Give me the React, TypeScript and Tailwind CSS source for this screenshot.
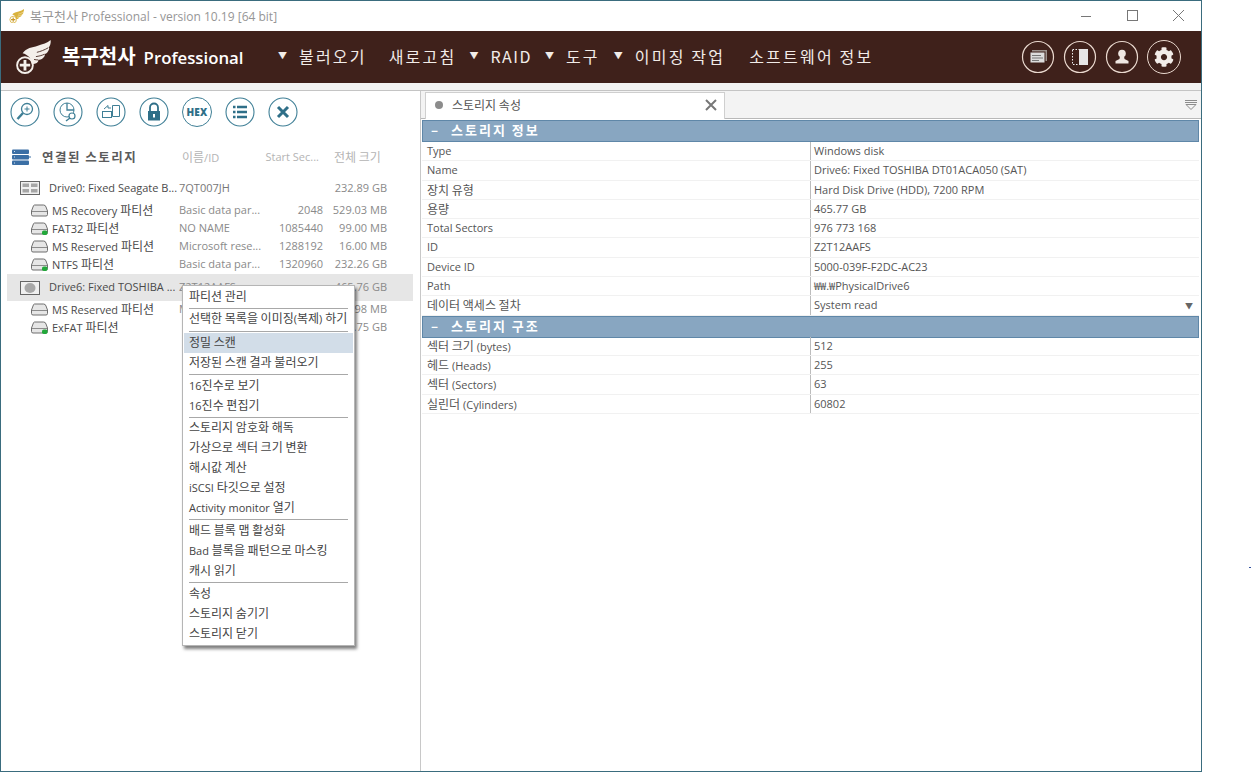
import React from "react";
import { FaCog } from "react-icons/fa";

const FONT = { fontFamily: '"Open Sans","Noto Sans CJK KR",sans-serif' };
const KFONT = { fontFamily: '"Noto Sans CJK KR",sans-serif' };

/* Korean runs are drawn slightly larger than the Latin text around them, as in the reference */
function K({ t, size = "text-[12px]" }: { t: string; size?: string }) {
  const parts = t.split(/([가-힣]+(?: [가-힣]+)*)/);
  return (
    <>
      {parts.map((p, i) =>
        /[가-힣]/.test(p) ? (
          <span key={i} className={size} style={KFONT}>
            {p}
          </span>
        ) : (
          <span key={i}>{p}</span>
        ),
      )}
    </>
  );
}

function Tool({ children }: { children: React.ReactNode }) {
  return (
    <svg width="30" height="30" viewBox="0 0 30 30" className="shrink-0">
      <circle cx="15" cy="15" r="14" fill="#fff" stroke="#3f7f96" strokeWidth="1.1" />
      {children}
    </svg>
  );
}

function HeadIcon({ children }: { children: React.ReactNode }) {
  return (
    <svg width="34" height="34" viewBox="0 0 34 34" className="shrink-0">
      <circle cx="17" cy="17" r="15.5" fill="none" stroke="#ead9cf" strokeWidth="1.2" />
      {children}
    </svg>
  );
}

function Wing({ size, color, plus, slit }: { size: number; color: string; plus: string; slit: string }) {
  return (
    <svg width={size} height={size * 0.9} viewBox="0 0 40 36">
      <path
        d="M8 14C12 8 18 8 24 6C29 4.500 34 3 37.500 0C38 3 37 6 35.500 8C36.500 8.500 36 10 35 11.500C34 13.500 32.500 14.500 31 15C32 16 31 17.500 29.500 19C28 20.500 26 21 24.500 21C25 22.500 23.500 24 21.500 24.800C20 25.400 18.500 25.200 17.500 24.500C17 19 13.500 15.500 8 14Z"
        fill={color}
      />
      <path d="M35 8.200C31 10.500 27 12 23 13M31 15C28 16.500 25 17 22 17.500M24.500 21C23 21 21.500 20.800 20 20.500" fill="none" stroke={slit} strokeWidth="0.9" />
      <circle cx="10.500" cy="26.500" r="8.300" fill="none" stroke={color} strokeWidth="2" />
      <path d="M10.500 21V32M5 26.500H16" stroke={plus} strokeWidth="3" />
    </svg>
  );
}

function Partition({ on }: { on?: boolean }) {
  return (
    <svg width="17" height="13" viewBox="0 0 17 13" className="shrink-0">
      <path d="M3.500 1H12.500Q14.500 1 15 3L16.500 7V10.500Q16.500 12 15 12H2Q0.500 12 0.500 10.500V7L2 3Q2.500 1 3.500 1Z" fill="#e6e6e6" stroke="#6e6e6e" />
      <path d="M1 7.500H16" stroke="#8c8c8c" />
      {on && <rect x="11" y="8.500" width="5.500" height="4.500" rx="1.800" fill="#22a83a" />}
    </svg>
  );
}

function DriveIcon({ kind }: { kind: 0 | 6 }) {
  return (
    <svg width="20" height="14" viewBox="0 0 20 14" className="shrink-0">
      <rect x="0.500" y="0.500" width="19" height="13" fill="#f0f0f0" stroke="#666" />
      {kind === 0 ? (
        <path d="M2.500 2.500H9V6H2.500ZM11 2.500H17.500V6H11ZM2.500 8H9V11.500H2.500ZM11 8H17.500V11.500H11Z" fill="#a6a6a6" />
      ) : (
        <ellipse cx="10" cy="7" rx="5.500" ry="5" fill="#a8a8a8" />
      )}
    </svg>
  );
}

type Part = [string, string, string, string, boolean];
const parts1: Part[] = [
  ["MS Recovery 파티션", "Basic data par...", "2048", "529.03 MB", false],
  ["FAT32 파티션", "NO NAME", "1085440", "99.00 MB", true],
  ["MS Reserved 파티션", "Microsoft rese...", "1288192", "16.00 MB", false],
  ["NTFS 파티션", "Basic data par...", "1320960", "232.26 GB", true],
];
const parts2: Part[] = [
  ["MS Reserved 파티션", "Microsoft rese...", "34", "15.98 MB", false],
  ["ExFAT 파티션", "", "", "465.75 GB", true],
];

function PartRow({ p }: { p: Part }) {
  return (
    <div className="grid h-[18px] grid-cols-[178px_85px_59px_64px] items-center text-[#8a8a8a]">
      <div className="flex items-center gap-[4px] pl-[30px] text-[#4a4a4a]">
        <Partition on={p[4]} />
        <span className="truncate">
          <K t={p[0]} />
        </span>
      </div>
      <span className="truncate">{p[1]}</span>
      <span className="text-right">{p[2]}</span>
      <span className="text-right">{p[3]}</span>
    </div>
  );
}

type MI = { t: string; h?: boolean; sep?: number };
const menu: MI[] = [
  { t: "파티션 관리", sep: 2 },
  { t: "선택한 목록을 이미징(복제) 하기", sep: 4 },
  { t: "정밀 스캔", h: true },
  { t: "저장된 스캔 결과 불러오기", sep: 3 },
  { t: "16진수로 보기" },
  { t: "16진수 편집기", sep: 2 },
  { t: "스토리지 암호화 해독" },
  { t: "가상으로 섹터 크기 변환" },
  { t: "해시값 계산" },
  { t: "iSCSI 타깃으로 설정" },
  { t: "Activity monitor 열기", sep: 3 },
  { t: "배드 블록 맵 활성화" },
  { t: "Bad 블록을 패턴으로 마스킹" },
  { t: "캐시 읽기", sep: 3 },
  { t: "속성" },
  { t: "스토리지 숨기기" },
  { t: "스토리지 닫기" },
];

const info: [string, string][] = [
  ["Type", "Windows disk"],
  ["Name", "Drive6: Fixed TOSHIBA DT01ACA050 (SAT)"],
  ["장치 유형", "Hard Disk Drive (HDD), 7200 RPM"],
  ["용량", "465.77 GB"],
  ["Total Sectors", "976 773 168"],
  ["ID", "Z2T12AAFS"],
  ["Device ID", "5000-039F-F2DC-AC23"],
  ["Path", "₩₩.₩PhysicalDrive6"],
  ["데이터 액세스 절차", "System read"],
];
const geo: [string, string][] = [
  ["섹터 크기 (bytes)", "512"],
  ["헤드 (Heads)", "255"],
  ["섹터 (Sectors)", "63"],
  ["실린더 (Cylinders)", "60802"],
];

function Section({ t }: { t: string }) {
  return (
    <div className="flex h-[22px] shrink-0 items-center border border-[#5f87a8] bg-[#88a6c1] pb-[2px] pl-[8px] text-[13px] font-bold tracking-[2px] text-white" style={KFONT}>
      <span className="w-[20px]">–</span>
      <span>{t}</span>
    </div>
  );
}

function Row({ r, drop }: { r: [string, string]; drop?: boolean }) {
  return (
    <div className="grid h-[19.300px] shrink-0 grid-cols-[388px_1fr] items-center border-b border-[#f1f1f1] text-[#555]">
      <span className="pl-[5px]">
        <K t={r[0]} />
      </span>
      <div className="flex h-full items-center justify-between border-l border-[#bcbcbc] pl-[3px] pr-[6px]">
        <span>{r[1]}</span>
        {drop && <span className="text-[8px] text-[#666]">▼</span>}
      </div>
    </div>
  );
}

const nav: [boolean, string, string][] = [
  [true, "불러오기", ""],
  [false, "새로고침", "ml-[22px]"],
  [true, "RAID", "ml-[13px]"],
  [true, "도구", "ml-[13px]"],
  [true, "이미징 작업", "ml-[14px]"],
  [false, "소프트웨어 정보", "ml-[24px]"],
];

export default function App() {
  return (
    <div className="relative h-[772px] w-[1251px] overflow-hidden bg-white text-[11px]" style={FONT}>
      <div className="flex h-[772px] w-[1202px] flex-col border border-[#3a6c7e] bg-white">
        {/* title bar */}
        <div className="flex h-[30px] shrink-0 items-center justify-between pl-[8px]">
          <div className="flex items-center gap-[5px] text-[12px] text-[#969696]">
            <Wing size={16} color="#d9b23c" plus="#c9982a" slit="#fff" />
            <span>
              <K t="복구천사" size="text-[13px]" /> Professional - version 10.19 [64 bit]
            </span>
          </div>
          <svg width="136" height="30" viewBox="0 0 136 30" stroke="#777" fill="none" className="shrink-0">
            <path d="M16 15.500H26" />
            <rect x="62.500" y="9.500" width="10" height="10" />
            <path d="M108 9L119 20M119 9L108 20" />
          </svg>
        </div>
        {/* brown header */}
        <div className="flex h-[52px] shrink-0 items-center bg-[#3f211b] pl-[14px] pr-[20px] text-white">
          <Wing size={38} color="#f4efea" plus="#f4efea" slit="#3f211b" />
          <div className="ml-[9px] flex w-[216px] items-baseline gap-[8px] pb-[3px] font-semibold">
            <span className="text-[20px]" style={KFONT}>
              복구천사
            </span>
            <span className="text-[16.800px]">Professional</span>
          </div>
          <div className="flex items-center pb-[3px] text-[16px] tracking-[2.200px] text-[#f2ece8]" style={KFONT}>
            {nav.map(([a, t, m]) => (
              <div key={t} className={`flex items-center gap-[12px] ${m}`}>
                {a && <span className="text-[9px] tracking-normal">▼</span>}
                <span className={t === "RAID" ? "tracking-[1.500px]" : ""}>{t}</span>
              </div>
            ))}
          </div>
          <div className="ml-auto flex items-center gap-[8px]">
            <HeadIcon>
              <rect x="11" y="10" width="15" height="11" fill="#9b918c" />
              <rect x="9" y="12" width="15" height="11" fill="#ddd" stroke="#3f211b" />
              <path d="M11 15.500H20M11 18H22M11 20.500H18" stroke="#777" />
            </HeadIcon>
            <HeadIcon>
              <rect x="9.500" y="9.500" width="7" height="15" fill="none" stroke="#eee" strokeDasharray="1.500 1.500" />
              <rect x="16" y="9" width="9" height="16" fill="#e6e6e6" />
            </HeadIcon>
            <HeadIcon>
              <circle cx="17" cy="13.500" r="3.800" fill="#efe7e2" />
              <path d="M15 16H19L19.500 19L23.500 21V23.500H10.500V21L14.500 19Z" fill="#efe7e2" />
            </HeadIcon>
            <div className="relative flex h-[34px] w-[34px] items-center justify-center rounded-full border-[1.2px] border-[#ead9cf] text-[#f2ece8]">
              <FaCog size={20} />
            </div>
          </div>
        </div>
        <div className="h-[8px] shrink-0 border-b border-[#c4c4c4] bg-[#f3f3f3]" />
        {/* body */}
        <div className="flex min-h-0 flex-1">
          {/* left */}
          <div className="relative w-[419px] shrink-0 bg-white">
            <div className="flex h-[55px] gap-[13px] pl-[9px] pt-[6px]">
              <Tool>
                <circle cx="17" cy="12" r="5.500" fill="none" stroke="#3f7f96" strokeWidth="1.300" />
                <path d="M13 16L7.500 22" stroke="#3f7f96" strokeWidth="2.500" />
                <path d="M17 9.500V14.500M14.500 12H19.500" stroke="#3f7f96" />
              </Tool>
              <Tool>
                <circle cx="14" cy="13" r="7" fill="none" stroke="#3f7f96" />
                <path d="M14 6V13H21" fill="none" stroke="#3f7f96" strokeWidth="1.300" />
                <circle cx="19" cy="19" r="3" fill="#fff" stroke="#3f7f96" strokeWidth="1.200" />
                <path d="M17 21L13 24" stroke="#3f7f96" strokeWidth="1.500" />
              </Tool>
              <Tool>
                <rect x="6.500" y="14.500" width="9" height="6" fill="none" stroke="#3f7f96" />
                <path d="M16.500 8.500H23.500V19.500H16.500Z" fill="none" stroke="#3f7f96" />
                <path d="M8 12L12 8.500V11H15" fill="none" stroke="#3f7f96" />
              </Tool>
              <Tool>
                <path d="M11 14V10.500A4 4 0 0 1 19 10.500V14" fill="none" stroke="#2f6f88" strokeWidth="1.800" />
                <rect x="9" y="14" width="12" height="9.500" fill="#2f6f88" />
                <rect x="14" y="17" width="2" height="3.500" fill="#fff" />
              </Tool>
              <div className="flex h-[30px] w-[30px] shrink-0 items-center justify-center rounded-full border border-[#3f7f96] text-[10px] font-extrabold tracking-[0.2px] text-[#2f6f88]">
                HEX
              </div>
              <Tool>
                <path d="M12 10H22M12 15H22M12 20H22M8 10H10.500M8 15H10.500M8 20H10.500" stroke="#2f6f88" strokeWidth="2.400" />
              </Tool>
              <Tool>
                <path d="M10 10L20 20M20 10L10 20" stroke="#2f6f88" strokeWidth="3" />
              </Tool>
            </div>

            <div className="grid h-[22px] grid-cols-[178px_85px_55px_70px] items-center text-[#b4b4b4]">
              <div className="flex items-center gap-[11px] pl-[11px] text-[12.500px] font-bold tracking-[1.500px] text-[#5b5b5b]" style={KFONT}>
                <svg width="19" height="17" viewBox="0 0 19 17" className="shrink-0">
                  <rect x="0" y="0.500" width="17" height="4.500" rx="1" fill="#3b6fa5" />
                  <rect x="0" y="6" width="17" height="4.500" rx="1" fill="#3b6fa5" />
                  <rect x="0" y="11.500" width="17" height="4.500" rx="1" fill="#3b6fa5" />
                  <path d="M17 8H19" stroke="#3b6fa5" />
                  <path d="M2 2.500H3M2 8H3M2 14H3" stroke="#cfe0f0" />
                </svg>
                <span>연결된 스토리지</span>
              </div>
              <span className="pl-[3px]">
                <K t="이름" />
                /ID
              </span>
              <span className="text-right">Start Sec...</span>
              <span className="pl-[15px]">
                <K t="전체 크기" />
              </span>
            </div>
            <div className="h-[7px]" />
            <div className="grid h-[26px] grid-cols-[178px_85px_59px_64px] items-center text-[#8a8a8a]">
              <div className="flex items-center gap-[9px] pl-[19px] text-[#4a4a4a]">
                <DriveIcon kind={0} />
                <span className="truncate">Drive0: Fixed Seagate B...</span>
              </div>
              <span className="text-[#777]">7QT007JH</span>
              <span />
              <span className="text-right">232.89 GB</span>
            </div>
            {parts1.map((p) => (
              <PartRow key={p[0]} p={p} />
            ))}
            <div className="ml-[6px] mr-[7px] mt-[1px] h-[27px] bg-[#e6e6e6]">
              <div className="grid h-full grid-cols-[172px_85px_59px_64px] items-center text-[#8a8a8a]">
                <div className="flex items-center gap-[9px] pl-[13px] text-[#4a4a4a]">
                  <DriveIcon kind={6} />
                  <span className="truncate">Drive6: Fixed TOSHIBA ...</span>
                </div>
                <span>Z2T12AAFS</span>
                <span />
                <span className="text-right">465.76 GB</span>
              </div>
            </div>
            <div className="-mt-px">
              {parts2.map((p) => (
                <PartRow key={p[0]} p={p} />
              ))}
            </div>

            {/* context menu */}
            <div className="absolute left-[181px] top-[194px] w-[173px] border border-[#b5b5b5] bg-white p-[1px] text-[#444] shadow-[2px_3px_3px_rgba(0,0,0,0.5)]">
              {menu.map((m) => (
                <React.Fragment key={m.t}>
                  <div className={`flex h-[20px] items-center whitespace-pre pb-[2px] pl-[5px] ${m.h ? "bg-[#d2dde8]" : ""}`}>
                    <span>
                      <K t={m.t} />
                    </span>
                  </div>
                  {m.sep !== undefined && (
                    <div className="flex items-center px-[5px]" style={{ height: m.sep }}>
                      <div className="h-px w-full bg-[#a8a8a8]" />
                    </div>
                  )}
                </React.Fragment>
              ))}
            </div>
          </div>
          {/* right */}
          <div className="flex min-w-0 flex-1 flex-col border-l border-[#c8c8c8] pl-[1px] pr-[2px]">
            <div className="-ml-[1px] -mr-[2px] flex h-[28px] shrink-0 items-end border-b border-[#b8b8b8] bg-[#f3f3f3] pl-[4px]">
              <div className="-mb-px flex h-[27px] w-[300px] items-center border border-b-0 border-[#cfcfcf] bg-white pb-[2px] pl-[9px] pr-[7px] text-[#555]">
                <span className="mr-[9px] h-[8px] w-[8px] rounded-full bg-[#8c8c8c]" />
                <span className="flex-1">
                  <K t="스토리지 속성" size="text-[12px]" />
                </span>
                <svg width="12" height="12" viewBox="0 0 12 12">
                  <path d="M1 1L11 11M11 1L1 11" stroke="#777" strokeWidth="2" />
                </svg>
              </div>
              <div className="mb-[7px] ml-auto mr-[4px]">
                <svg width="12" height="11" viewBox="0 0 12 11" fill="none" stroke="#8c8c8c">
                  <path d="M0 0.500H12M0 2.500H12" />
                  <path d="M1 4.500H11L6 9.500Z" />
                </svg>
              </div>
            </div>
            <div className="h-px shrink-0" />
            <Section t="스토리지 정보" />
            {info.map((r, i) => (
              <Row key={r[0]} r={r} drop={i === 8} />
            ))}
            <Section t="스토리지 구조" />
            <div className="-mt-px flex flex-col">
              {geo.map((r) => (
                <Row key={r[0]} r={r} />
              ))}
            </div>
          </div>
        </div>
      </div>
      <div className="absolute left-[1249px] top-[567px] h-px w-[2px] bg-[#3050a0]" />
    </div>
  );
}
